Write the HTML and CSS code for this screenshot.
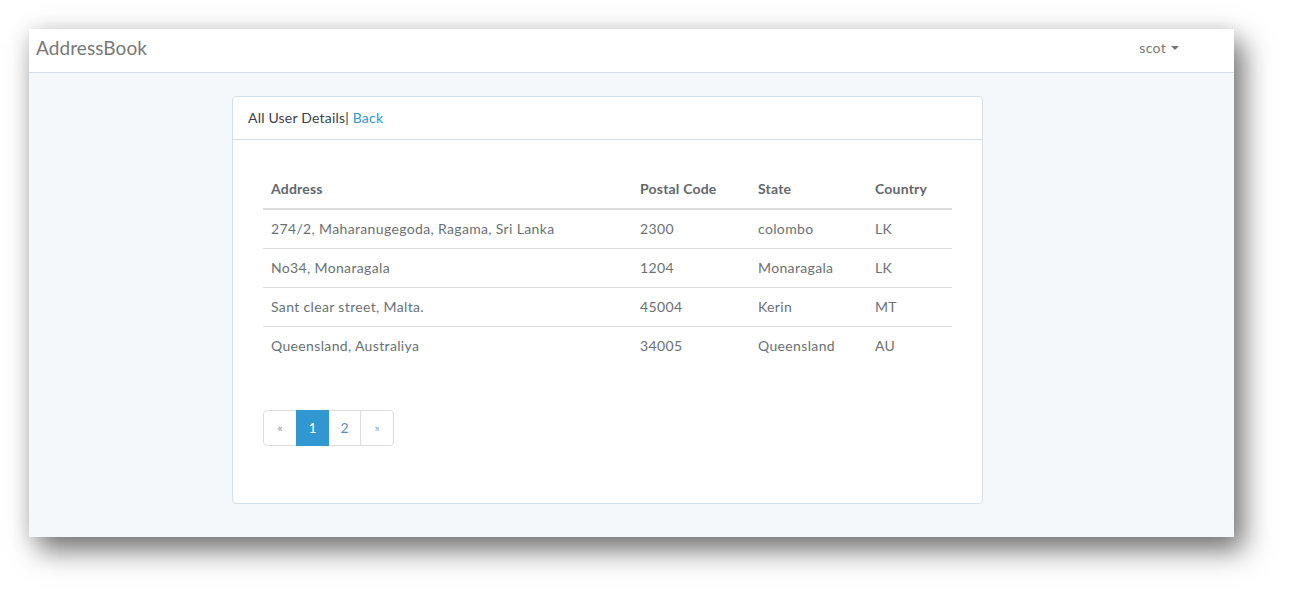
FILE: index.html
```html
<!DOCTYPE html>
<html lang="en">
<head>
<meta charset="utf-8">
<title>AddressBook</title>
<link rel="stylesheet" href="styles.css">
</head>
<body>
<div class="window">
  <nav class="navbar">
    <a class="brand" href="#">AddressBook</a>
    <a class="user" href="#">scot <span class="caret"></span></a>
  </nav>
  <main class="main">
    <section class="panel">
      <div class="panel-heading">All User Details| <a href="#" class="link">Back</a></div>
      <div class="panel-body">
        <table class="table">
          <thead>
            <tr><th class="c-addr">Address</th><th class="c-post">Postal Code</th><th class="c-state">State</th><th>Country</th></tr>
          </thead>
          <tbody>
            <tr><td>274/2, Maharanugegoda, Ragama, Sri Lanka</td><td>2300</td><td>colombo</td><td>LK</td></tr>
            <tr><td>No34, Monaragala</td><td>1204</td><td>Monaragala</td><td>LK</td></tr>
            <tr><td>Sant clear street, Malta.</td><td>45004</td><td>Kerin</td><td>MT</td></tr>
            <tr><td>Queensland, Australiya</td><td>34005</td><td>Queensland</td><td>AU</td></tr>
          </tbody>
        </table>
        <ul class="pagination">
          <li class="page disabled"><span>&laquo;</span></li>
          <li class="page active"><span>1</span></li>
          <li class="page"><a href="#">2</a></li>
          <li class="page"><a href="#">&raquo;</a></li>
        </ul>
      </div>
    </section>
  </main>
</div>
</body>
</html>
```
FILE: styles.css
```css
* { box-sizing: border-box; }
html, body { margin: 0; background: #ffffff; }
body {
  padding: 29px 59px 59px 29px;
  font-family: "Lato", "Open Sans", sans-serif;
  font-size: 14px;
  line-height: 1.6;
  color: #636b6f;
}
a { text-decoration: none; }
.window {
  width: 1205px;
  height: 508px;
  background: #f5f8fa;
  box-shadow: 10px 14px 26px rgba(0,0,0,0.5), 0 2px 22px rgba(0,0,0,0.14);
  display: flex;
  flex-direction: column;
}
.navbar {
  height: 44px;
  background: #ffffff;
  border-bottom: 1px solid #d3e0e9;
  display: flex;
  align-items: center;
  justify-content: space-between;
  padding: 0 55px 4px 7px;
}
.brand {
  font-size: 19px;
  color: #777777;
  letter-spacing: 0.1px;
}
.user {
  color: #777777;
  font-size: 14px;
  letter-spacing: 0.3px;
  display: flex;
  align-items: center;
  gap: 5px;
}
.caret {
  width: 0; height: 0;
  border-left: 4px solid transparent;
  border-right: 4px solid transparent;
  border-top: 4px solid #777777;
}
.main {
  padding: 23px 0 0 203px;
}
.panel {
  width: 751px;
  height: 408px;
  background: #ffffff;
  border: 1px solid #d3e0e9;
  border-radius: 4px;
}
.panel-heading {
  height: 43px;
  padding: 10px 15px;
  border-bottom: 1px solid #d3e0e9;
  color: #3d4145;
  letter-spacing: 0.2px;
}
.link { color: #3097d1; }
.panel-body {
  padding: 30px 30px 0 30px;
}
.table {
  width: 689px;
  border-collapse: collapse;
  margin: 0;
  letter-spacing: 0.35px;
}
.table th, .table td {
  text-align: left;
  padding: 8px 8px;
  line-height: 22px;
}
.table th {
  font-weight: 700;
  color: #62686c;
  border-bottom: 2px solid #dddddd;
  letter-spacing: 0.2px;
}
.table td { border-top: 1px solid #dddddd; color: #6a7175; }
.table tbody tr:first-child td { border-top: 0; }
.c-addr { width: 369px; }
.c-post { width: 118px; }
.c-state { width: 117px; }
.pagination {
  list-style: none;
  margin: 45px 0 0 0;
  padding: 0;
  display: flex;
}
.page span, .page a {
  display: block;
  height: 36px;
  padding: 6px 0;
  text-align: center;
  width: 33px;
  border: 1px solid #dddddd;
  margin-left: -1px;
  color: #5b8fb4;
  background: #ffffff;
  line-height: 22.4px;
}
.page:first-child span { margin-left: 0; width: 34px; border-radius: 4px 0 0 4px; font-size: 12px; }
.page:last-child a { width: 34px; border-radius: 0 4px 4px 0; font-size: 12px; color: #8aaac4; }
.page.disabled span { color: #999999; }
.page.active span { background: #3097d1; border-color: #3097d1; color: #ffffff; position: relative; }
```
